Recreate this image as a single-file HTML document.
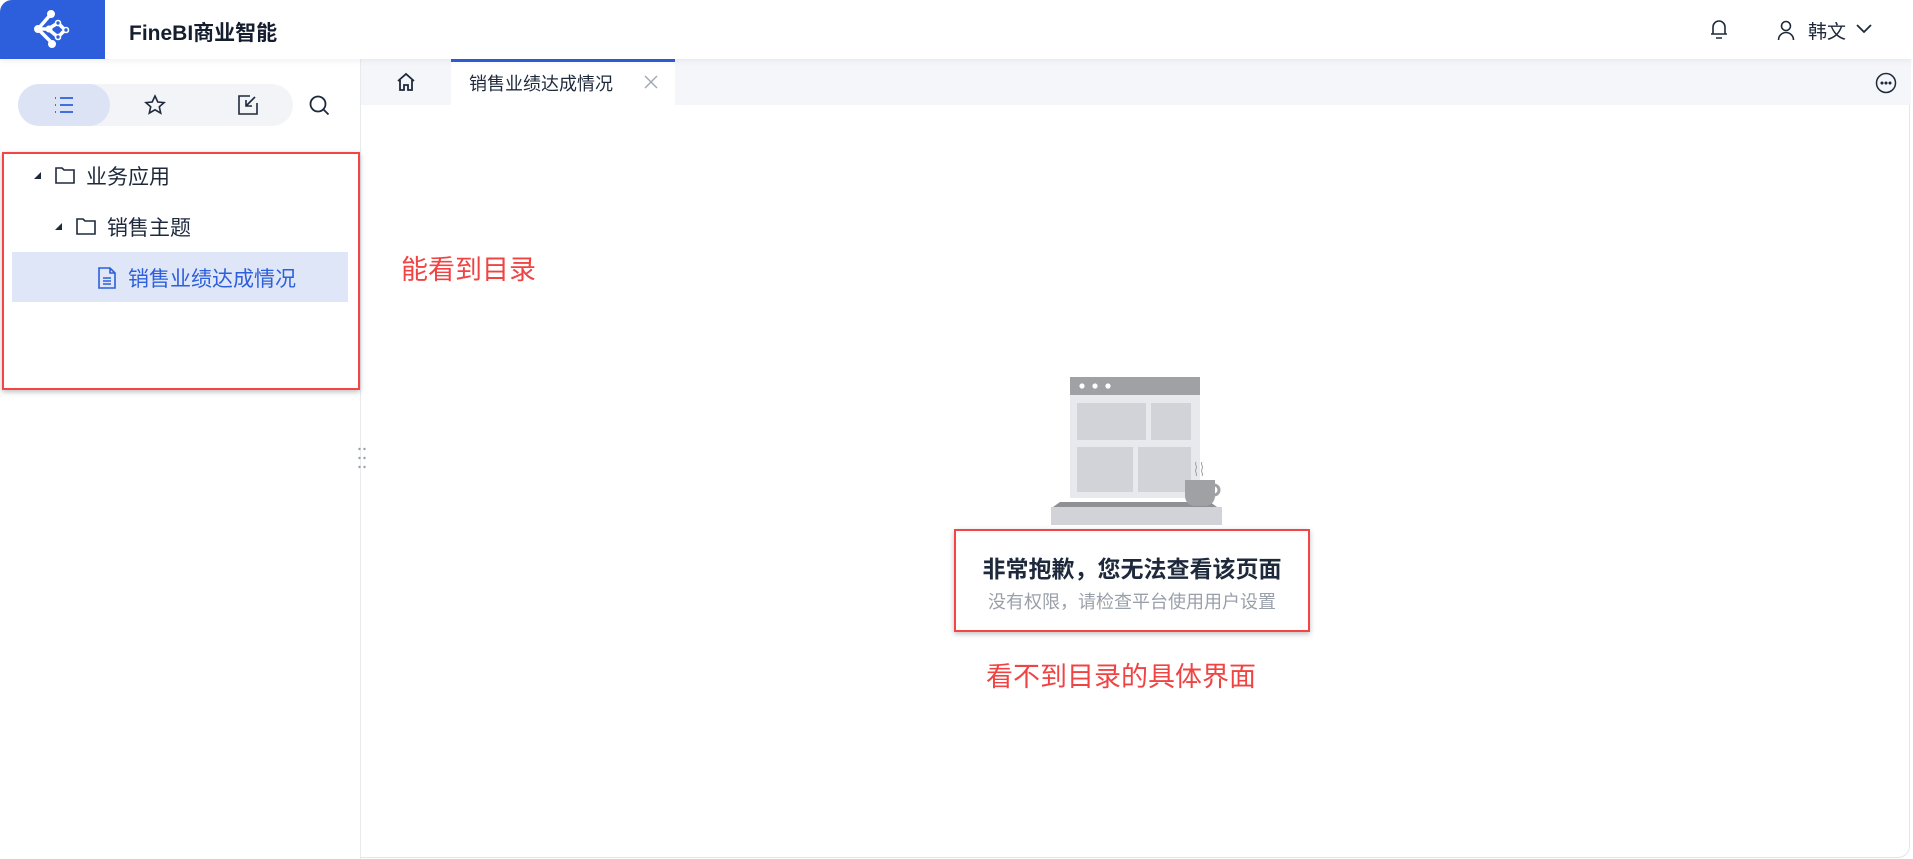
<!DOCTYPE html>
<html><head><meta charset="utf-8"><style>
*{margin:0;padding:0;box-sizing:border-box}
body{width:1913px;height:859px;overflow:hidden;background:#fff;font-family:"Liberation Sans","Noto Sans CJK SC",sans-serif;position:relative;color:#1e2a3c}
.abs{position:absolute}
.frame{left:0;top:0;width:1910px;height:858px;border:1px solid #e3e5ea;border-radius:12px;overflow:hidden}
.hdr{left:0;top:0;width:1913px;height:59px;background:#fff;box-shadow:0 2px 6px rgba(0,0,0,.06);z-index:2}
.logo{left:0;top:0;width:105px;height:59px;background:#2d5fdc;border-top-left-radius:12px}
.side{left:0;top:59px;width:361px;height:800px;border-right:1px solid #e8eaee;background:#fff}
.tabbar{left:361px;top:59px;width:1550px;height:46px;background:#f5f6fa}
.red{border:2px solid #f24646;box-shadow:0 2px 5px rgba(0,0,0,.25)}
.rt{color:#f04444;font-size:27px;white-space:nowrap}
</style></head><body>
<div class="abs frame"></div>
<div class="abs hdr">
 <div class="abs logo">
  <svg class="abs" style="left:30px;top:10px" width="46" height="40" viewBox="0 0 46 40" fill="none" stroke="#fff">
   <path d="M21 4 L8 19 L22 33 M8 19 L18 19 L28 13 L35 20 L28 27 L18 19" stroke-width="3.5"/>
   <circle cx="21" cy="4" r="3.5" fill="#fff"/><circle cx="8" cy="19" r="3.5" fill="#fff"/><circle cx="22" cy="34" r="3.5" fill="#fff"/><circle cx="19" cy="19" r="3" fill="#fff"/>
   <circle cx="28" cy="13" r="2.5" fill="#2d5fdc" stroke-width="1.6"/><circle cx="36" cy="20" r="2.5" fill="#2d5fdc" stroke-width="1.6"/><circle cx="28" cy="27" r="2.5" fill="#2d5fdc" stroke-width="1.6"/>
  </svg>
 </div>
 <div class="abs" style="left:129px;top:17px;font-size:21px;font-weight:bold;color:#141e2e">FineBI商业智能</div>
 <svg class="abs" style="left:1709px;top:18px" width="20" height="22" viewBox="0 0 20 22" fill="none" stroke="#1e2a3c" stroke-width="1.6"><path d="M4 16V9a6 6 0 0 1 12 0v7M2 16h16M7 20h6"/></svg>
 <svg class="abs" style="left:1777px;top:19px" width="18" height="22" viewBox="0 0 18 22" fill="none" stroke="#1e2a3c" stroke-width="1.6"><circle cx="9" cy="7" r="4.5"/><path d="M1.5 21a7.5 7.5 0 0 1 15 0"/></svg>
 <div class="abs" style="left:1808px;top:17px;font-size:19px;color:#1e2a3c">韩文</div>
 <svg class="abs" style="left:1855px;top:23px" width="18" height="12" viewBox="0 0 18 12" fill="none" stroke="#1e2a3c" stroke-width="1.8"><path d="M2 2l7 7 7-7"/></svg>
</div>
<div class="abs side">
 <div class="abs" style="left:18px;top:25px;width:275px;height:42px;border-radius:21px;background:#f3f4f7"></div>
 <div class="abs" style="left:18px;top:25px;width:92px;height:42px;border-radius:21px;background:#dbe3f5"></div>
 <svg class="abs" style="left:53px;top:37px" width="22" height="18" viewBox="0 0 22 18" fill="none" stroke="#2d5fdc" stroke-width="1.8"><path d="M2 2h1M2 9h1M2 16h1M7 2h13M7 9h13M7 16h13"/></svg>
 <svg class="abs" style="left:144px;top:35px" width="22" height="22" viewBox="0 0 22 22" fill="none" stroke="#1e2a3c" stroke-width="1.6"><path d="M11 2l2.8 6 6.3.6-4.8 4.2 1.4 6.3L11 15.8 5.3 19.1l1.4-6.3L1.9 8.6 8.2 8z"/></svg>
 <svg class="abs" style="left:237px;top:35px" width="22" height="22" viewBox="0 0 22 22" fill="none" stroke="#1e2a3c" stroke-width="1.6"><path d="M13 2H2v18h18V9M18 3L9 12M9 6v6h6"/></svg>
 <svg class="abs" style="left:308px;top:35px" width="22" height="22" viewBox="0 0 22 22" fill="none" stroke="#1e2a3c" stroke-width="1.8"><circle cx="10" cy="10" r="7.5"/><path d="M15.5 15.5l5 5"/></svg>
 <div class="abs" style="left:12px;top:193px;width:336px;height:50px;background:#dfe6f8"></div>
 <div class="abs" style="left:34px;top:113px;width:0;height:0;border-left:7px solid transparent;border-bottom:7px solid #1e2a3c"></div>
 <svg class="abs" style="left:55px;top:107px" width="20" height="18" viewBox="0 0 20 18" fill="none" stroke="#1e2a3c" stroke-width="1.6"><path d="M1 2h6l2 2h10v13H1z"/></svg>
 <div class="abs" style="left:86px;top:102px;font-size:21px">业务应用</div>
 <div class="abs" style="left:55px;top:164px;width:0;height:0;border-left:7px solid transparent;border-bottom:7px solid #1e2a3c"></div>
 <svg class="abs" style="left:76px;top:158px" width="20" height="18" viewBox="0 0 20 18" fill="none" stroke="#1e2a3c" stroke-width="1.6"><path d="M1 2h6l2 2h10v13H1z"/></svg>
 <div class="abs" style="left:107px;top:153px;font-size:21px">销售主题</div>
 <svg class="abs" style="left:98px;top:208px" width="18" height="22" viewBox="0 0 18 22" fill="none" stroke="#2d5fdc" stroke-width="1.6"><path d="M1 1h11l5 5v15H1zM12 1v5h5M5 11h8M5 14h8M5 17h8"/></svg>
 <div class="abs" style="left:128px;top:204px;font-size:21px;color:#2d5fdc">销售业绩达成情况</div>
 <svg class="abs" style="left:358px;top:388px" width="8" height="22" viewBox="0 0 8 22" fill="#9aa0aa"><circle cx="1.5" cy="2" r="1.2"/><circle cx="6.5" cy="2" r="1.2"/><circle cx="1.5" cy="11" r="1.2"/><circle cx="6.5" cy="11" r="1.2"/><circle cx="1.5" cy="20" r="1.2"/><circle cx="6.5" cy="20" r="1.2"/></svg>
</div>
<div class="abs red" style="left:2px;top:152px;width:358px;height:238px"></div>
<div class="abs tabbar">
 <svg class="abs" style="left:35px;top:13px" width="20" height="20" viewBox="0 0 20 20" fill="none" stroke="#1e2a3c" stroke-width="1.8"><path d="M2 9L10 2l8 7M4 8v10h4v-5h4v5h4V8"/></svg>
 <div class="abs" style="left:90px;top:0;width:224px;height:46px;background:#fff;border-top:3px solid #2d5fdc"></div>
 <div class="abs" style="left:108px;top:11px;font-size:18px">销售业绩达成情况</div>
 <svg class="abs" style="left:283px;top:16px" width="14" height="14" viewBox="0 0 14 14" stroke="#a0a6b0" stroke-width="1.4"><path d="M1 1l12 12M13 1L1 13"/></svg>
 <svg class="abs" style="left:1514px;top:13px" width="22" height="22" viewBox="0 0 22 22" fill="none" stroke="#1e2a3c" stroke-width="1.5"><circle cx="11" cy="11" r="9.5"/><circle cx="7" cy="11" r=".8" fill="#1e2a3c"/><circle cx="11" cy="11" r=".8" fill="#1e2a3c"/><circle cx="15" cy="11" r=".8" fill="#1e2a3c"/></svg>
</div>
<div class="abs rt" style="left:401px;top:248px">能看到目录</div>
<svg class="abs" style="left:1050px;top:376px" width="176" height="152" viewBox="0 0 176 152">
 <rect x="20" y="1" width="130" height="121" fill="#e8e9ec"/>
 <rect x="20" y="1" width="130" height="18" fill="#a0a1a5"/>
 <circle cx="32" cy="10" r="2.6" fill="#fff"/><circle cx="45" cy="10" r="2.6" fill="#fff"/><circle cx="58" cy="10" r="2.6" fill="#fff"/>
 <rect x="27" y="27" width="69" height="37" fill="#d1d3d9"/><rect x="101" y="27" width="40" height="37" fill="#d1d3d9"/>
 <rect x="27" y="71" width="56" height="45" fill="#d1d3d9"/><rect x="88" y="71" width="53" height="45" fill="#d1d3d9"/>
 <path d="M3 131L10 126H160L167 131Z" fill="#8f9094"/>
 <rect x="1" y="131" width="171" height="18" fill="#d1d3d9"/>
 <path d="M135 104h30v16a10 10 0 0 1-10 10h-10a10 10 0 0 1-10-10z" fill="#a0a1a5"/>
 <path d="M164 109a5 5 0 0 1 0 10h-3" fill="none" stroke="#a0a1a5" stroke-width="3"/>
 <path d="M146 86c-2 3 2 4 0 7s2 4 0 7M152 86c-2 3 2 4 0 7s2 4 0 7" fill="none" stroke="#a0a1a5" stroke-width="1"/>
</svg>
<div class="abs red" style="left:954px;top:529px;width:356px;height:103px"></div>
<div class="abs" style="left:954px;top:550px;width:356px;text-align:center;font-size:23px;font-weight:bold;color:#1e2a3c">非常抱歉，您无法查看该页面</div>
<div class="abs" style="left:954px;top:588px;width:356px;text-align:center;font-size:18px;color:#9aa0aa">没有权限，请检查平台使用用户设置</div>
<div class="abs rt" style="left:986px;top:655px">看不到目录的具体界面</div>
</body></html>
